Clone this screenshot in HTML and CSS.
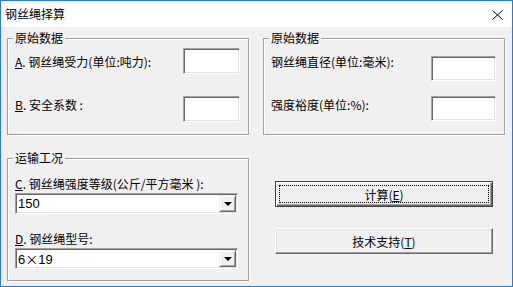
FILE: index.html
```html
<!DOCTYPE html>
<html lang="zh-CN">
<head>
    <meta charset="UTF-8">
    <title>钢丝绳择算</title>
    <link rel="stylesheet" href="styles.css">
</head>
<body>
    <div class="window">
        <div class="titlebar">
            <span class="title">钢丝绳择算</span>
            <svg class="close" width="11" height="10" viewBox="0 0 11 10">
                <path d="M0.5 0.5L10.5 9.5M10.5 0.5L0.5 9.5" stroke="#000" stroke-width="1"/>
            </svg>
        </div>

        <div class="client">
            <div class="top">
                <!-- left: force / safety factor -->
                <fieldset class="group small">
                    <legend>原始数据</legend>
                    <div class="row l1">
                        <label class="lbl"><u>A</u>. 钢丝绳受力(单位:吨力):</label>
                        <input class="field" type="text">
                    </div>
                    <div class="row l2">
                        <label class="lbl"><u>B</u>. 安全系数 :</label>
                        <input class="field" type="text">
                    </div>
                </fieldset>

                <!-- right: diameter / margin -->
                <fieldset class="group small">
                    <legend>原始数据</legend>
                    <div class="row r1">
                        <label class="lbl">钢丝绳直径(单位:毫米):</label>
                        <input class="field wide" type="text">
                    </div>
                    <div class="row r2">
                        <label class="lbl">强度裕度(单位:%):</label>
                        <input class="field wide" type="text">
                    </div>
                </fieldset>
            </div>

            <div class="bottom">
                <fieldset class="group tall">
                    <legend>运输工况</legend>
                    <label class="lbl c1"><u>C</u>. 钢丝绳强度等级(公斤/平方毫米 ):</label>
                    <div class="combo">
                        <span class="value">150</span>
                        <span class="arrow"><i class="tri"></i></span>
                    </div>
                    <label class="lbl c2"><u>D</u>. 钢丝绳型号:</label>
                    <div class="combo">
                        <span class="value">6<span class="cjk">×</span>19</span>
                        <span class="arrow"><i class="tri"></i></span>
                    </div>
                </fieldset>

                <div class="actions">
                    <button class="btn default" type="button">计算(<u>E</u>)</button>
                    <button class="btn" type="button">技术支持(<u>T</u>)</button>
                </div>
            </div>
        </div>
    </div>
</body>
</html>
```

FILE: styles.css
```css
html, body {
    margin: 0;
    padding: 0;
}
body {
    font-family: "Noto Sans CJK SC", sans-serif;
    font-size: 12px;
    color: #000;
    background: #fff;
}
.window {
    width: 513px;
    height: 287px;
    box-sizing: border-box;
    border: 1px solid #2b7bcf;
    background: #f0f0f0;
    display: flex;
    flex-direction: column;
}
.titlebar {
    height: 26px;
    flex: none;
    background: #fff;
    display: flex;
    align-items: center;
    justify-content: space-between;
    padding: 0 9px 0 4px;
}
.title {
    font-size: 12px;
    line-height: 14px;
}
.close {
    display: block;
    margin-top: 1px;
}
.client {
    padding: 4px 0 0 6px;
}
.top, .bottom {
    display: flex;
}
.top {
    gap: 14px;
}
.bottom {
    margin-top: 16px;
}

/* group boxes */
.group {
    margin: 0;
    padding: 0 8px 0 7px;
    width: 242px;
    box-sizing: border-box;
    min-width: 0;
    border: 1px solid #a0a0a0;
    box-shadow: inset 1px 1px 0 #fff, 1px 1px 0 #fff;
}
.group.small {
    height: 104px;
}
.group.tall {
    height: 130px;
    display: flex;
    flex-direction: column;
    align-items: flex-start;
}
.group legend {
    margin-left: -2px;
    padding: 0 2px;
    line-height: 14px;
    background: #f0f0f0;
}
.row {
    display: flex;
    justify-content: space-between;
    align-items: flex-start;
}
.lbl {
    line-height: 14px;
    white-space: nowrap;
}
.field {
    box-sizing: border-box;
    margin: 0;
    padding: 0;
    width: 57px;
    height: 26px;
    background: #fff;
    border: 1px solid;
    border-color: #a0a0a0 #fff #fff #a0a0a0;
    box-shadow: inset 1px 1px 0 #696969, inset -1px -1px 0 #e3e3e3;
    outline: none;
}
.field.wide {
    width: 65px;
    height: 25px;
}
.l1 { margin-top: 3px; }
.l1 .lbl { margin-top: 7px; }
.l2 { margin-top: 22px; }
.l2 .lbl { margin-top: 2px; }
.r1 { margin-top: 10px; }
.r1 .field { margin-top: 1px; }
.r2 { margin-top: 15px; }
.r2 .lbl { margin-top: 2px; }

.c1 { margin-top: 12px; }
.c2 { margin-top: 18px; }

/* combo boxes */
.combo {
    display: flex;
    width: 223px;
    height: 21px;
    margin-top: 2px;
    box-sizing: border-box;
    background: #fff;
    border: 1px solid;
    border-color: #a0a0a0 #fff #fff #a0a0a0;
    box-shadow: inset 1px 1px 0 #696969, inset -1px -1px 0 #e3e3e3;
    padding: 1px;
}
.combo .value {
    flex: 1;
    padding-left: 1px;
    font-family: "Liberation Sans", sans-serif;
    font-size: 13px;
    line-height: 17px;
}
.cjk {
    font-family: "Noto Sans CJK SC", sans-serif;
}
.combo .arrow {
    width: 17px;
    box-sizing: border-box;
    background: #f0f0f0;
    border: 1px solid;
    border-color: #f0f0f0 #696969 #696969 #f0f0f0;
    box-shadow: inset 1px 1px 0 #fff, inset -1px -1px 0 #a0a0a0;
    display: flex;
    align-items: center;
    justify-content: center;
}
.tri {
    width: 0;
    height: 0;
    border-left: 4px solid transparent;
    border-right: 4px solid transparent;
    border-top: 4px solid #000;
    margin-top: 1px;
}

/* buttons */
.actions {
    display: flex;
    flex-direction: column;
    gap: 21px;
    padding-top: 30px;
    margin-left: 26px;
}
.btn {
    width: 218px;
    height: 26px;
    padding: 0;
    font-family: "Noto Sans CJK SC", sans-serif;
    font-size: 12px;
    color: #000;
    background: #f0f0f0;
    border: 1px solid;
    border-color: #fff #696969 #696969 #fff;
    box-shadow: inset -1px -1px 0 #a0a0a0, inset 1px 1px 0 #e3e3e3;
}
.btn.default {
    border-color: #404040;
    box-shadow: inset 1px 1px 0 #fff, inset -1px -1px 0 #696969, inset -2px -2px 0 #a0a0a0;
    outline: 1px dotted #000;
    outline-offset: -5px;
}
```
